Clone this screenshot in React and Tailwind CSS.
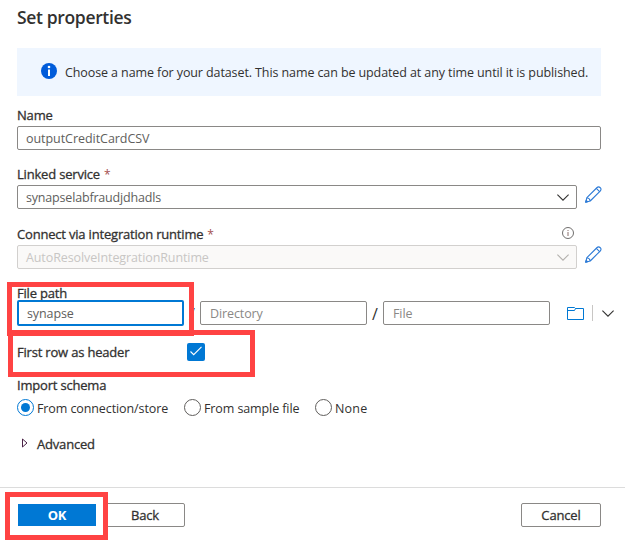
import React from "react";

function Chevron({ className }) {
  return (
    <svg width="12" height="7" viewBox="0 0 12 7" fill="none" stroke="currentColor" strokeWidth="1.1" className={className}>
      <path d="M.4.6 6 6.2 11.6.6" />
    </svg>
  );
}

function Pencil() {
  return (
    <svg width="17" height="17" viewBox="0 0 17 17" fill="none" stroke="#2c7ad6" strokeWidth="1.1" strokeLinejoin="round" className="ml-2 mt-px shrink-0">
      <path d="M.7 16.200 1.900 11.700 12.100 1.500a2.050 2.050 0 0 1 2.900 0l.4.4a2.050 2.050 0 0 1 0 2.900L5.200 15z" />
      <path d="M11.300 2.300l3.300 3.300M1.900 11.700c1.700.2 3.100 1.600 3.300 3.300" />
      <path d="M.7 16.200l.5-1.800 1.300 1.300z" fill="#2c7ad6" />
    </svg>
  );
}

function Label({ children, required }) {
  return (
    <div className="h-5 whitespace-nowrap text-[13px] leading-5 tracking-[-0.19px] text-[#323130] [-webkit-text-stroke:0.3px_#323130]">
      {children}
      {required && <span className="ml-1 text-[12px] text-[#a4504f] [-webkit-text-stroke:0px]">*</span>}
    </div>
  );
}

function Radio({ checked, label, className, text }) {
  return (
    <div className={`flex h-[19px] shrink-0 items-center whitespace-nowrap ${className}`}>
      <span className={`flex size-[17px] items-center justify-center rounded-full border ${checked ? "border-[#0078d4]" : "border-[#605e5c]"}`}>
        {checked && <span className="size-[9px] rounded-full bg-[#0078d4]" />}
      </span>
      <span className={`ml-[3px] pt-0.5 ${text}`}>{label}</span>
    </div>
  );
}

export default function App() {
  return (
    <main className="relative h-[546px] w-[625px] overflow-hidden bg-white font-['Open_Sans','Noto_Sans',sans-serif] text-[12.5px] leading-5 tracking-[-0.1px] text-[#323130]">
      <div className="flex flex-col pl-[17px]">
        <h1 className="mt-[5px] h-6 whitespace-nowrap text-[17.5px] font-semibold leading-6 tracking-[-0.35px]">Set properties</h1>

        <div className="mt-[19px] flex h-12 w-[584px] items-center bg-[#eff6ff] pl-6">
          <svg width="16" height="16" viewBox="0 0 16 16" className="-mt-0.5 shrink-0">
            <circle cx="8" cy="8" r="8" fill="#015cda" />
            <circle cx="8" cy="4" r="1.300" fill="#fff" />
            <path d="M7 6.500h2v6.500H7z" fill="#fff" />
          </svg>
          <span className="ml-2 whitespace-nowrap pt-0.5">Choose a name for your dataset. This name can be updated at any time until it is published.</span>
        </div>

        <div className="mt-[9px] mb-px"><Label>Name</Label></div>
        <div className="flex h-6 w-[584px] items-center rounded-[2px] border border-[#8a8886] px-2 tracking-[-0.05px] text-[#605e5c]"><span className="pt-0.5">outputCreditCardCSV</span></div>

        <div className="mt-[14px] mb-px"><Label required>Linked service</Label></div>
        <div className="flex">
          <div className="flex h-6 w-[560px] items-center justify-between rounded-[2px] border border-[#8a8886] px-2 pr-[7px] text-[#605e5c]">
            <span className="pt-0.5 tracking-[-0.18px]">synapselabfraudjdhadls</span><Chevron className="mt-px text-[#323130]" />
          </div>
          <Pencil />
        </div>

        <div className="mt-[15px] mb-px flex h-5 w-[560px] items-center justify-between">
          <Label required>Connect via integration runtime</Label>
          <svg width="12" height="12" viewBox="0 0 12 12" fill="none" stroke="#605e5c" className="mr-[3px] mb-[3px]">
            <circle cx="6" cy="6" r="5.500" strokeWidth=".9" />
            <path d="M6 5v4M6 3v1" stroke="#8a6f6c" />
          </svg>
        </div>
        <div className="flex">
          <div className="flex h-6 w-[560px] items-center justify-between rounded-[2px] border border-[#d2d0ce] bg-[#faf9f8] px-2 pr-[7px] text-[#c8c6c4]">
            <span className="pt-0.5">AutoResolveIntegrationRuntime</span><Chevron className="mt-px text-[#b3b0ad]" />
          </div>
          <Pencil />
        </div>

        <div className="mt-[14px] h-[17px]"><Label>File path</Label></div>
        <div className="flex h-[26px] items-center">
          <div className="flex h-[26px] w-[167px] items-center rounded-[2px] border-2 border-[#0078d4] px-2 text-[#605e5c]"><span className="pt-0.5">synapse</span></div>
          <span className="w-4 pt-0.5 text-center text-[16px]">/</span>
          <div className="flex h-6 w-[167px] items-center rounded-[2px] border border-[#8a8886] px-[9px] text-[#8a8886]"><span className="pt-0.5">Directory</span></div>
          <span className="w-4 pt-0.5 text-center text-[16px]">/</span>
          <div className="flex h-6 w-[167px] items-center rounded-[2px] border border-[#8a8886] px-[9px] text-[#8a8886]"><span className="pt-0.5">File</span></div>
          <svg width="17" height="13" viewBox="0 0 17 13" fill="none" stroke="#0078d4" className="ml-[17px]">
            <path d="M.5.500h7l1 1h8v11H.500zM.500 3.500h7l1-2" />
          </svg>
          <span className="ml-2 h-4 w-px bg-[#c8c6c4]" />
          <Chevron className="ml-[9px]" />
        </div>

        <div className="mt-4 flex h-5 items-center">
          <div className="w-[170px]"><Label>First row as header</Label></div>
          <span className="flex size-[18px] items-center justify-center rounded-[2px] bg-[#0078d4]">
            <svg width="12" height="10" viewBox="0 0 12 10" fill="none" stroke="#fff" strokeWidth="1.100" className="-mt-0.5"><path d="M.5 5.500 3.700 8.700 11.500.900" /></svg>
          </span>
        </div>

        <div className="mt-[13px] mb-px"><Label>Import schema</Label></div>
        <div className="mt-0.5 flex">
          <Radio checked label="From connection/store" className="w-[167px]" text="" />
          <Radio label="From sample file" className="w-[131px]" text="" />
          <Radio label="None" className="" text="tracking-[0.2px]" />
        </div>
        <div className="mt-[17px] flex h-5 items-center">
          <svg width="6" height="10" viewBox="0 0 6 10" fill="none" stroke="#4b2347" className="mb-[3px] ml-[5px] mr-[9px]"><path d="M.5 1v8L5 5z" /></svg>
          <Label>Advanced</Label>
        </div>
      </div>

      <footer className="mt-[33px] flex h-[59px] border-t border-[#dcdcdc] pt-[15px] pl-[18px] text-[13px]">
        <button className="mt-px h-[22px] w-[78px] bg-[#0078d4] font-bold leading-[22px] tracking-[-0.3px] text-white">OK</button>
        <button className="ml-[9px] h-6 w-20 rounded-[2px] border border-[#8a8886] leading-[22px] tracking-[-0.15px] [-webkit-text-stroke:0.3px_#323130]">Back</button>
        <button className="ml-[336px] h-6 w-20 rounded-[2px] border border-[#8a8886] leading-[22px] tracking-[-0.15px] [-webkit-text-stroke:0.3px_#323130]">Cancel</button>
      </footer>

      <div className="absolute left-2 top-[330px] h-[47px] w-[247px] border-[5px] border-[#ff4343]" />
      <div className="absolute left-[7px] top-[282px] h-[54px] w-[187px] border-[5px] border-b-[6px] border-[#ff4343]" />
      <div className="absolute left-[5px] top-[492px] h-12 w-[103px] border-[5px] border-[#ff4343]" />
    </main>
  );
}
